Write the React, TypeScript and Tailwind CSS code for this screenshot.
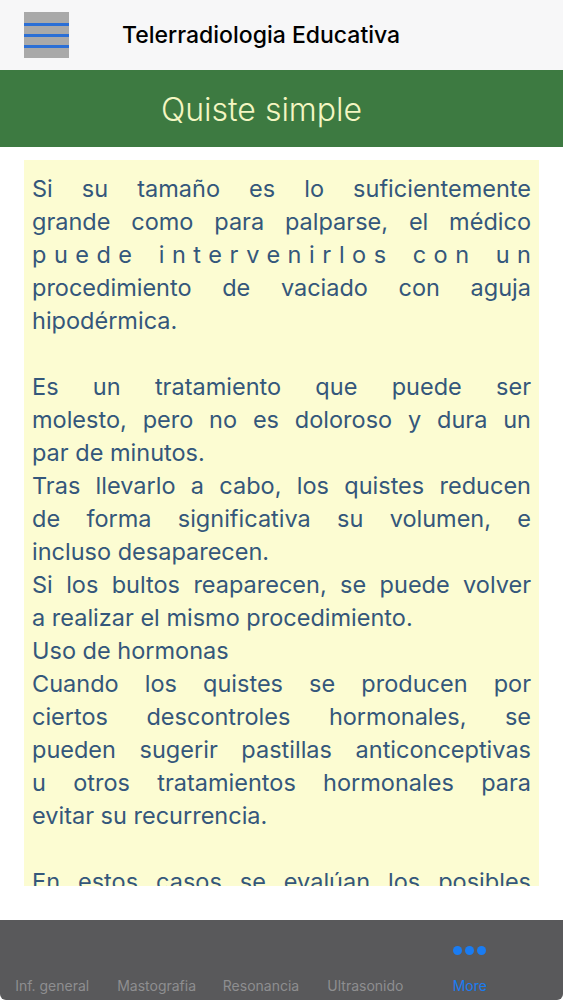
import React from "react";

type Row = { text: string; end?: boolean; spaced?: boolean };

const rows: Row[] = [
  { text: "Si su tamaño es lo suficientemente" },
  { text: "grande como para palparse, el médico" },
  { text: "puede intervenirlos con un", spaced: true },
  { text: "procedimiento de vaciado con aguja" },
  { text: "hipodérmica.", end: true },
  { text: "", end: true },
  { text: "Es un tratamiento que puede ser" },
  { text: "molesto, pero no es doloroso y dura un" },
  { text: "par de minutos.", end: true },
  { text: "Tras llevarlo a cabo, los quistes reducen" },
  { text: "de forma significativa su volumen, e" },
  { text: "incluso desaparecen.", end: true },
  { text: "Si los bultos reaparecen, se puede volver" },
  { text: "a realizar el mismo procedimiento.", end: true },
  { text: "Uso de hormonas", end: true },
  { text: "Cuando los quistes se producen por" },
  { text: "ciertos descontroles hormonales, se" },
  { text: "pueden sugerir pastillas anticonceptivas" },
  { text: "u otros tratamientos hormonales para" },
  { text: "evitar su recurrencia.", end: true },
  { text: "", end: true },
  { text: "En estos casos se evalúan los posibles" },
];

const tabs = ["Inf. general", "Mastografia", "Resonancia", "Ultrasonido"];

function Hamburger() {
  return (
    <div className="flex h-[46px] w-[45px] flex-col justify-center gap-[8px] bg-[#a9a9a9]">
      <div className="h-[3px] w-full bg-[#2b6fd6]" />
      <div className="h-[3px] w-full bg-[#2b6fd6]" />
      <div className="h-[3px] w-full bg-[#2b6fd6]" />
    </div>
  );
}

function TextLine({ row }: { row: Row }) {
  if (!row.text) return <div className="h-[33px]" />;
  if (row.spaced) {
    // iOS justification stretches letters too on this short line
    return (
      <div className="-mr-[7.5px] h-[33px] whitespace-nowrap text-justify tracking-[7.5px] [text-align-last:justify]">
        {row.text}
      </div>
    );
  }
  return (
    <div
      className={
        row.end
          ? "h-[33px] whitespace-nowrap text-left"
          : "h-[33px] whitespace-nowrap text-justify [text-align-last:justify]"
      }
    >
      {row.text}
    </div>
  );
}

export default function App() {
  return (
    <div className="flex h-[1000px] w-[563px] flex-col overflow-hidden bg-white font-['Inter',sans-serif]">
      <header className="flex h-[70px] shrink-0 items-center bg-[#f7f7f8] pl-[24px]">
        <Hamburger />
        <h1 className="ml-[53px] text-[23px] font-medium text-black">
          Telerradiologia Educativa
        </h1>
      </header>

      <div className="flex h-[77px] shrink-0 items-center justify-center bg-[#3d7a41] pr-[40px] pt-[3px]">
        <h2 className="text-[32px] font-light text-[#f4f6c2]">Quiste simple</h2>
      </div>

      <main className="flex-1 pt-[13px]">
        <div className="mx-[24px] h-[726px] overflow-hidden bg-[#fcfcd2] px-[8px] pt-[12px] text-[23.5px] leading-[33px] text-[#34577b]">
          {rows.map((row, i) => (
            <TextLine key={i} row={row} />
          ))}
        </div>
      </main>

      <nav className="h-[80px] shrink-0 rounded-b-[6px] bg-[#59595b] pr-[41px]">
        <div className="grid h-full grid-cols-5">
          {tabs.map((t) => (
            <div key={t} className="flex flex-col items-center justify-end pb-[4px]">
              <span className="text-[14px] text-[#8e8e90]">{t}</span>
            </div>
          ))}
          <div className="flex flex-col items-center justify-end pb-[4px]">
            <div className="mb-[20px] flex gap-[3px]">
              <span className="h-[9px] w-[9px] rounded-full bg-[#1a7cf2]" />
              <span className="h-[9px] w-[9px] rounded-full bg-[#1a7cf2]" />
              <span className="h-[9px] w-[9px] rounded-full bg-[#1a7cf2]" />
            </div>
            <span className="text-[14px] text-[#1a7cf2]">More</span>
          </div>
        </div>
      </nav>
    </div>
  );
}
